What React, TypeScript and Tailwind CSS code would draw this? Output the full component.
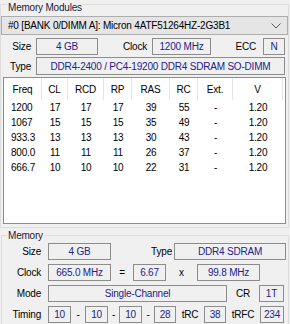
import React from "react";

const rows = [
    ["1200", "17", "17", "17", "39", "55", "-", "1.20"],
    ["1067", "15", "15", "15", "35", "49", "-", "1.20"],
    ["933.3", "13", "13", "13", "30", "43", "-", "1.20"],
    ["800.0", "11", "11", "11", "26", "37", "-", "1.20"],
    ["666.7", "10", "10", "10", "22", "31", "-", "1.20"],
];

const cols = [
    { label: "Freq", w: "w-[38px]" },
    { label: "CL", w: "w-[26px]" },
    { label: "RCD", w: "w-[36px]" },
    { label: "RP", w: "w-[28px]" },
    { label: "RAS", w: "w-[38px]" },
    { label: "RC", w: "w-[28px]" },
    { label: "Ext.", w: "w-[35px]" },
    { label: "V", w: "w-[50px]" },
];

function Box({ w, children }: { w: string; children?: React.ReactNode }) {
    return (
        <div className={`${w} h-[17px] shrink-0 border border-[#8c8c8c] bg-[#f0f0f0] flex items-center justify-center text-[#22228a] leading-none whitespace-nowrap`}>
            {children}
        </div>
    );
}

function Label({ w, children, right = true }: { w: string; children: React.ReactNode; right?: boolean }) {
    return (
        <div className={`${w} shrink-0 flex items-center ${right ? "justify-end" : "justify-center"} text-black whitespace-nowrap`}>
            {children}
        </div>
    );
}

export default function App() {
    return (
        <div
            className="w-[290px] h-[324px] bg-[#f0f0f0] overflow-hidden text-[10px] tracking-[-0.2px] text-black"
            style={{ fontFamily: '"Liberation Sans", Arial, sans-serif' }}
        >
            {/* Memory Modules group */}
            <div className="mt-[4px] w-[289px] h-[224px] border border-[#dcdcdc]">
                <div className="-mt-[4px] ml-[6px] w-fit px-[1px] h-[13px] leading-[13px] bg-[#f0f0f0] text-[#1a1a40]">
                    Memory Modules
                </div>

                <div className="mt-[2px] h-[19px] border border-[#adadad] bg-[#e5e5e5] flex items-center pl-[6px] pr-[6px]">
                    <span className="whitespace-nowrap">#0 [BANK 0/DIMM A]: Micron 4ATF51264HZ-2G3B1</span>
                    <svg className="ml-auto" width="10" height="6" viewBox="0 0 10 6">
                        <polyline points="0.5,0.5 5,5 9.5,0.5" fill="none" stroke="#5a5a5a" strokeWidth="1" />
                    </svg>
                </div>

                <div className="mt-[3px] flex items-center h-[17px]">
                    <Label w="w-[30px]">Size</Label>
                    <div className="w-[5px]" />
                    <Box w="w-[62px]">4 GB</Box>
                    <Label w="w-[49px]">Clock</Label>
                    <div className="w-[5px]" />
                    <Box w="w-[59px]">1200 MHz</Box>
                    <Label w="w-[45px]">ECC</Label>
                    <div className="w-[7px]" />
                    <Box w="w-[22px]">N</Box>
                </div>

                <div className="mt-[2px] flex items-center h-[18px]">
                    <Label w="w-[30px]">Type</Label>
                    <div className="w-[5px]" />
                    <div className="w-[249px] h-[18px] border border-[#8c8c8c] flex items-center justify-center text-[#22228a] whitespace-nowrap">
                        DDR4-2400 / PC4-19200 DDR4 SDRAM SO-DIMM
                    </div>
                </div>

                <div className="mt-[2px] ml-[2px] w-[283px] h-[147px] border border-[#8c8c8c] bg-white">
                    <div className="flex h-[22px]">
                        {cols.map((c) => (
                            <div key={c.label} className={`${c.w} flex items-center justify-center border-r border-[#e5e5e5]`}>
                                {c.label}
                            </div>
                        ))}
                    </div>
                    {rows.map((r) => (
                        <div key={r[0]} className="flex h-[15px]">
                            {r.map((v, i) => (
                                <div
                                    key={i}
                                    className={`${cols[i].w} flex items-center ${i === 0 ? "justify-start pl-[7px]" : "justify-center"}`}
                                >
                                    {v}
                                </div>
                            ))}
                        </div>
                    ))}
                </div>
            </div>

            {/* Memory group */}
            <div className="mt-[7px] ml-[1px] w-[288px] h-[100px] border border-[#dcdcdc]">
                <div className="-mt-[7px] ml-[5px] w-fit px-[1px] h-[13px] leading-[13px] bg-[#f0f0f0] text-[#1a1a40]">
                    Memory
                </div>

                <div className="mt-[1px] flex items-center h-[17px]">
                    <Label w="w-[39px]">Size</Label>
                    <div className="w-[7px]" />
                    <Box w="w-[63px]">4 GB</Box>
                    <Label w="w-[61px]">Type</Label>
                    <div className="w-[2px]" />
                    <Box w="w-[112px]">DDR4 SDRAM</Box>
                </div>

                <div className="mt-[4px] flex items-center h-[17px]">
                    <Label w="w-[39px]">Clock</Label>
                    <div className="w-[7px]" />
                    <Box w="w-[63px]">665.0 MHz</Box>
                    <Label w="w-[22px]" right={false}>=</Label>
                    <Box w="w-[33px]">6.67</Box>
                    <Label w="w-[31px]" right={false}>x</Label>
                    <Box w="w-[63px]">99.8 MHz</Box>
                </div>

                <div className="mt-[4px] flex items-center h-[17px]">
                    <Label w="w-[39px]">Mode</Label>
                    <div className="w-[7px]" />
                    <Box w="w-[179px]">Single-Channel</Box>
                    <Label w="w-[32px]" right={false}>CR</Label>
                    <Box w="w-[25px]">1T</Box>
                </div>

                <div className="mt-[4px] flex items-center h-[17px]">
                    <Label w="w-[39px]">Timing</Label>
                    <div className="w-[7px]" />
                    <Box w="w-[23px]">10</Box>
                    <Label w="w-[14px]" right={false}>-</Label>
                    <Box w="w-[23px]">10</Box>
                    <Label w="w-[11px]" right={false}>-</Label>
                    <Box w="w-[23px]">10</Box>
                    <Label w="w-[12px]" right={false}>-</Label>
                    <Box w="w-[22px]">28</Box>
                    <Label w="w-[28px]" right={false}>tRC</Label>
                    <Box w="w-[22px]">38</Box>
                    <Label w="w-[34px]" right={false}>tRFC</Label>
                    <Box w="w-[24px]">234</Box>
                </div>
            </div>
        </div>
    );
}
